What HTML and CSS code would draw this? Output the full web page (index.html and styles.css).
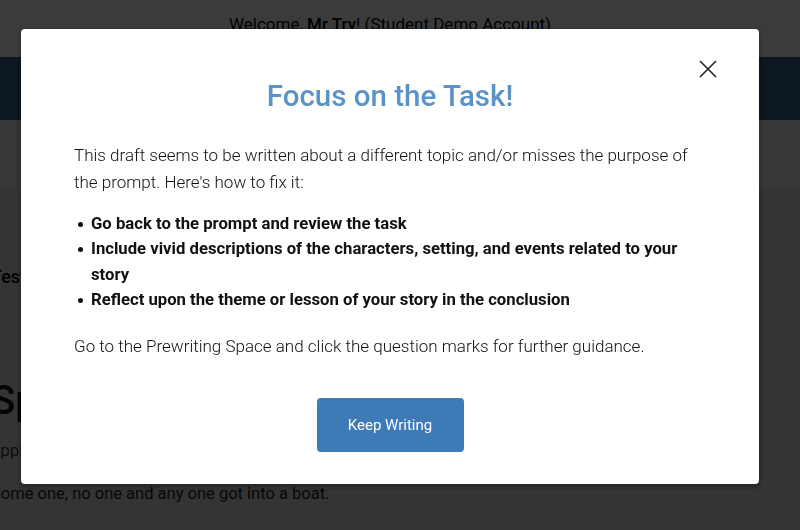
FILE: index.html
```html
<!DOCTYPE html>
<html lang="en">
<head>
	<meta charset="UTF-8">
	<title>Focus on the Task</title>
	<link rel="stylesheet" href="styles.css">
</head>
<body>
	<header class="topbar">Welcome, <b>Mr Try</b>! (Student Demo Account)</header>
	<nav class="mainnav"></nav>
	<div class="subbar"></div>
	<main class="content">
		<h3 class="label">Test Assignment</h3>
		<h1 class="heading">Spelling Practice</h1>
		<p class="sub">apply your knowledge</p>
		<p class="line">Some one, no one and any one got into a boat.</p>
	</main>

	<div class="overlay">
		<section class="modal">
			<button class="close" aria-label="Close">
				<svg width="20" height="20" viewBox="0 0 20 20"><path d="M2 2L18 18M18 2L2 18" stroke="#222" stroke-width="1.6" fill="none"/></svg>
			</button>
			<h2 class="title">Focus on the Task!</h2>
			<p class="intro">This draft seems to be written about a different topic and/or misses the purpose of the prompt. Here's how to fix it:</p>
			<ul class="tips">
				<li>Go back to the prompt and review the task</li>
				<li>Include vivid descriptions of the characters, setting, and events related to your story</li>
				<li>Reflect upon the theme or lesson of your story in the conclusion</li>
			</ul>
			<p class="intro">Go to the Prewriting Space and click the question marks for further guidance.</p>
			<div class="actions"><button class="btn">Keep Writing</button></div>
		</section>
	</div>
</body>
</html>
```

FILE: styles.css
```css
*{margin: 0; padding: 0; box-sizing: border-box;}
body{font-family: Roboto, "Liberation Sans", sans-serif; background: #dedede; color: #222; height: 530px; overflow: hidden;}
li{list-style: none;}

.topbar{height: 57px; background: #fff; text-align: center; padding-right: 20px; font-size: 17px; line-height: 48px; color: #000;}
.topbar b{font-weight: 500;}
.mainnav{height: 63px; background: #39648f;}
.subbar{height: 70px; background: #ececec;}
.content{margin-left: -9px; padding-top: 76px;}
.label{font-size: 18px; font-weight: 500; color: #000;}
.heading{margin-top: 90px; font-size: 40px; font-weight: 500; color: #111;}
.sub{margin-top: 16px; font-size: 17px; color: #444;}
.line{margin-top: 24px; font-size: 16.5px; color: #222;}

.overlay{position: fixed; top: 0; left: 0; right: 0; bottom: 0; background: rgba(0,0,0,.77);}
.modal{position: relative; width: 738px; margin: 29px 0 0 21px; background: #fff; border-radius: 4px; padding: 50px 53px 32px 53px; box-shadow: 0 2px 6px rgba(0,0,0,.4);}
.close{position: absolute; top: 30px; right: 41px; border: 0; background: none; width: 20px; height: 20px; cursor: pointer;}
.close svg{display: block;}
.title{text-align: center; font-size: 29.5px; font-weight: 500; line-height: 34px; color: #5b93c7; margin-bottom: 28.5px;}
.intro{font-size: 17px; font-weight: 300; line-height: 27px; color: #111;}
.tips{margin: 15px 0 20.5px; padding-left: 17px;}
.tips li{position: relative; font-size: 16.7px; font-weight: 700; line-height: 25.5px; color: #111;}
.tips li:before{content: ""; position: absolute; left: -13px; top: 11px; width: 5px; height: 5px; border-radius: 50%; background: #111;}
.actions{text-align: center; margin-top: 37.5px;}
.btn{width: 147px; height: 54px; border: 0; border-radius: 4px; background: #3d7ab6; color: #fff; font-family: Roboto, "Liberation Sans", sans-serif; font-size: 15px; cursor: pointer;}
```
